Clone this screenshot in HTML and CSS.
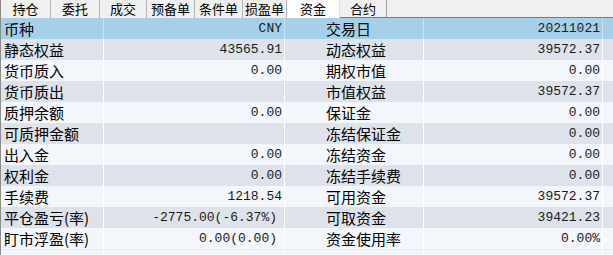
FILE: index.html
```html
<!DOCTYPE html>
<html lang="zh-CN">
<head>
    <meta charset="UTF-8">
    <title>资金</title>
    <link rel="stylesheet" href="styles.css">
</head>
<body>
    <div class="tabs">
        <div class="tab t1">持仓</div>
        <div class="tab t2">委托</div>
        <div class="tab t3">成交</div>
        <div class="tab t4">预备单</div>
        <div class="tab t5">条件单</div>
        <div class="tab t6">损盈单</div>
        <div class="tab t7 active">资金</div>
        <div class="tab t8">合约</div>
        <div class="tab-rest"></div>
    </div>

    <div class="grid">
        <div class="row head">
            <div class="c lab">币种</div><div class="c val">CNY</div><div class="c gap"></div>
            <div class="c lab">交易日</div><div class="c val">20211021</div><div class="c end"></div>
        </div>
        <div class="row dark">
            <div class="c lab">静态权益</div><div class="c val">43565.91</div><div class="c gap"></div>
            <div class="c lab">动态权益</div><div class="c val">39572.37</div><div class="c end"></div>
        </div>
        <div class="row light">
            <div class="c lab">货币质入</div><div class="c val">0.00</div><div class="c gap"></div>
            <div class="c lab">期权市值</div><div class="c val">0.00</div><div class="c end"></div>
        </div>
        <div class="row dark">
            <div class="c lab">货币质出</div><div class="c val"></div><div class="c gap"></div>
            <div class="c lab">市值权益</div><div class="c val">39572.37</div><div class="c end"></div>
        </div>
        <div class="row light">
            <div class="c lab">质押余额</div><div class="c val">0.00</div><div class="c gap"></div>
            <div class="c lab">保证金</div><div class="c val">0.00</div><div class="c end"></div>
        </div>
        <div class="row dark">
            <div class="c lab">可质押金额</div><div class="c val"></div><div class="c gap"></div>
            <div class="c lab">冻结保证金</div><div class="c val">0.00</div><div class="c end"></div>
        </div>
        <div class="row light">
            <div class="c lab">出入金</div><div class="c val">0.00</div><div class="c gap"></div>
            <div class="c lab">冻结资金</div><div class="c val">0.00</div><div class="c end"></div>
        </div>
        <div class="row dark">
            <div class="c lab">权利金</div><div class="c val">0.00</div><div class="c gap"></div>
            <div class="c lab">冻结手续费</div><div class="c val">0.00</div><div class="c end"></div>
        </div>
        <div class="row light">
            <div class="c lab">手续费</div><div class="c val">1218.54</div><div class="c gap"></div>
            <div class="c lab">可用资金</div><div class="c val">39572.37</div><div class="c end"></div>
        </div>
        <div class="row dark">
            <div class="c lab">平仓盈亏(率)</div><div class="c val wide">-2775.00(-6.37%)</div><div class="c gap"></div>
            <div class="c lab">可取资金</div><div class="c val">39421.23</div><div class="c end"></div>
        </div>
        <div class="row light">
            <div class="c lab">盯市浮盈(率)</div><div class="c val wide">0.00(0.00)</div><div class="c gap"></div>
            <div class="c lab">资金使用率</div><div class="c val">0.00%</div><div class="c end"></div>
        </div>
        <div class="row light last">
            <div class="c lab"></div><div class="c val"></div><div class="c gap"></div>
            <div class="c lab"></div><div class="c val"></div><div class="c end"></div>
        </div>
    </div>
</body>
</html>
```

FILE: styles.css
```css
body {
    margin: 0;
    width: 613px;
    height: 255px;
    overflow: hidden;
    background: #ffffff;
    font-family: "Noto Sans CJK SC", "Liberation Sans", sans-serif;
    color: #000;
}
.tabs {
    display: flex;
    height: 18px;
    background: #f0f0f0;
    border-left: 1px solid #8c8c8c;
    box-sizing: border-box;
}
.tab {
    height: 18px;
    line-height: 18px;
    font-size: 13px;
    text-align: center;
    box-sizing: border-box;
    border-right: 1px solid #b4b4b4;
    background: #f0f0f0;
}
.tab.t1 { width: 50px; }
.tab.t2 { width: 49px; }
.tab.t3 { width: 47px; }
.tab.t4 { width: 48px; }
.tab.t5 { width: 48px; }
.tab.t6 { width: 44px; }
.tab.t7 { width: 53px; }
.tab.t8 { width: 47px; border-bottom: 1px solid #7a7a7a; border-right-color: #a0a0a0; }
.tab.active {
    background: #ffffff;
    border-right: 1px solid #e0e0e0;
}
.tab-rest {
    flex: 1;
    border-bottom: 1px solid #7a7a7a;
}
.grid {
    border-left: 1px solid #8c8c8c;
    height: 237px;
    overflow: hidden;
}
.row {
    display: grid;
    grid-template-columns: 103px 181px 38px 101px 179px 1fr;
    height: 21px;
}
.row.head { background: #a6d0ea; }
.row.dark { background: #dee3eb; }
.row.light { background: #f3f6fa; }
.row.last {
    height: 6px;
    border-top: 1px solid #e6eaf0;
    box-sizing: border-box;
}
.c {
    height: 21px;
    line-height: 21px;
    box-sizing: border-box;
    white-space: nowrap;
    overflow: hidden;
}
.last .c { height: 5px; }
.lab {
    font-size: 15px;
    padding-left: 3px;
    border-right: 1px solid #ffffff;
}
.val {
    font-family: "Liberation Mono", monospace;
    font-size: 13px;
    color: #1a1a1a;
    text-align: right;
    padding-right: 2px;
    border-right: 1px solid #ffffff;
}
.val.wide {
    padding-right: 7px;
}
.head .c {
    border-right-color: #c8e2f2;
}
```
